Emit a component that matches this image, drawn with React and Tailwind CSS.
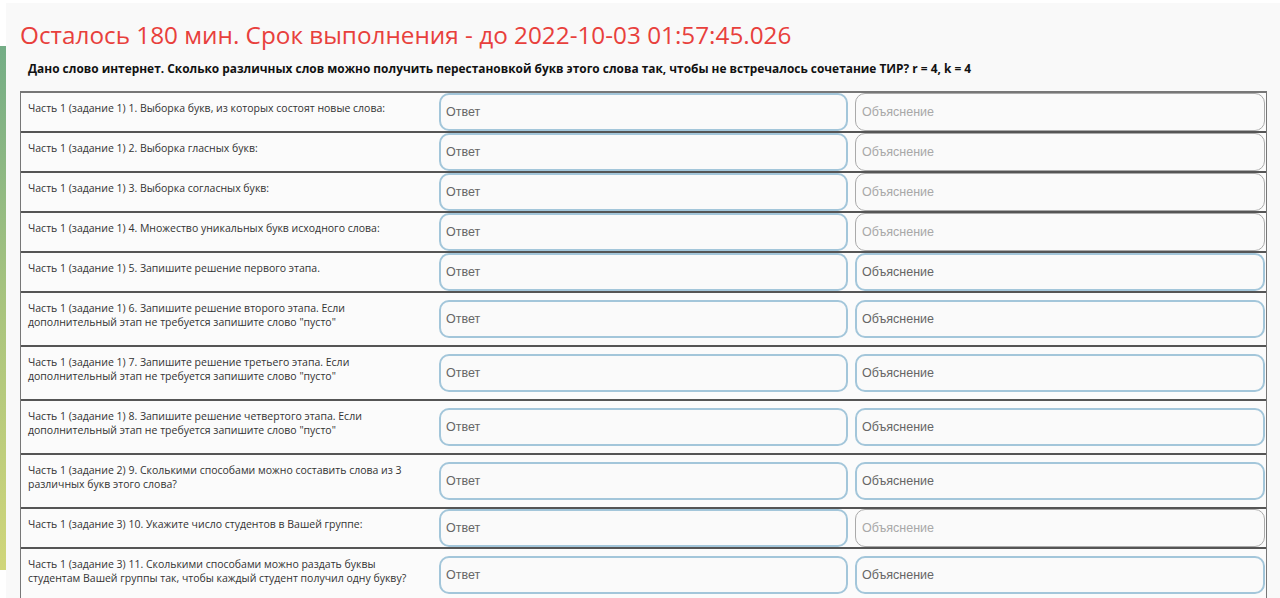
import React from 'react'

const rows = [
  { label: 'Часть 1 (задание 1) 1. Выборка букв, из которых состоят новые слова:', explain: false },
  { label: 'Часть 1 (задание 1) 2. Выборка гласных букв:', explain: false },
  { label: 'Часть 1 (задание 1) 3. Выборка согласных букв:', explain: false },
  { label: 'Часть 1 (задание 1) 4. Множество уникальных букв исходного слова:', explain: false },
  { label: 'Часть 1 (задание 1) 5. Запишите решение первого этапа.', explain: true },
  { label: 'Часть 1 (задание 1) 6. Запишите решение второго этапа. Если дополнительный этап не требуется запишите слово "пусто"', explain: true },
  { label: 'Часть 1 (задание 1) 7. Запишите решение третьего этапа. Если дополнительный этап не требуется запишите слово "пусто"', explain: true },
  { label: 'Часть 1 (задание 1) 8. Запишите решение четвертого этапа. Если дополнительный этап не требуется запишите слово "пусто"', explain: true },
  { label: 'Часть 1 (задание 2) 9. Сколькими способами можно составить слова из 3 различных букв этого слова?', explain: true },
  { label: 'Часть 1 (задание 3) 10. Укажите число студентов в Вашей группе:', explain: false },
  { label: 'Часть 1 (задание 3) 11. Сколькими способами можно раздать буквы студентам Вашей группы так, чтобы каждый студент получил одну букву?', explain: true },
]

function Field({ placeholder, active, className }) {
  return (
    <div className={className}>
      <input
        placeholder={placeholder}
        disabled={!active}
        className={
          active
            ? 'w-full h-[38px] rounded-[10px] border-2 border-[#a3c6da] bg-[#fafafa] px-[5px] text-[12.5px] text-[#555] placeholder:text-[#666] outline-none font-["Liberation_Sans",Arial,sans-serif]'
            : 'w-full h-[38px] rounded-[10px] border border-[#aaa] bg-[#fafafa] px-[6px] text-[12.5px] text-[#aaa] placeholder:text-[#a8a8a8] outline-none font-["Liberation_Sans",Arial,sans-serif]'
        }
      />
    </div>
  )
}

export default function App() {
  return (
    <div className="flex h-[598px] overflow-hidden bg-white font-['Open_Sans',sans-serif]">
      <div className="w-[6px] shrink-0 pt-[46px]">
        <div className="h-[524px] bg-gradient-to-b from-[#74ad86] via-[#a9c47e] to-[#d0d67a]" />
      </div>
      <div className="flex-1 mt-[3px] bg-[#f9f9f9] pl-[14px] pr-[13px]">
        <h1 className="pt-[15px] text-[24.3px] leading-[33px] text-[#e8403c]">
          Осталось 180 мин. Срок выполнения - до 2022-10-03 01:57:45.026
        </h1>
        <p className="mt-[9px] pl-[8px] text-[11.9px] leading-[17px] font-bold text-[#111]">
          Дано слово интернет. Сколько различных слов можно получить перестановкой букв этого слова так, чтобы не встречалось сочетание ТИР? r = 4, k = 4
        </p>
        <div className="mt-[14px] border-l border-r border-t-2 border-[#777]">
          {rows.map((r, i) => (
            <div key={i} className="grid grid-cols-[417px_415px_1fr] items-center border-b-2 border-[#555] bg-[#fbfbfb]">
              <div className="self-start pl-[7px] pr-[20px] pt-[8px] pb-[16px] text-[10.5px] leading-[14px] text-[#333]">
                {r.label}
              </div>
              <Field className="pl-[1px] pr-[5px]" placeholder="Ответ" active />
              <Field className="pl-[2px] pr-[1px]" placeholder="Объяснение" active={r.explain} />
            </div>
          ))}
        </div>
      </div>
    </div>
  )
}
